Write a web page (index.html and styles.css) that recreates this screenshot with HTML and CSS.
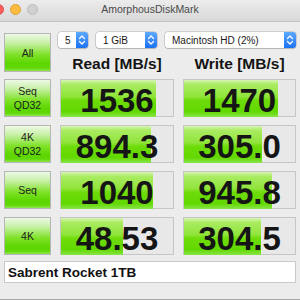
FILE: index.html
```html
<!DOCTYPE html>
<html lang="en">
<head>
  <meta charset="UTF-8">
  <title>AmorphousDiskMark</title>
  <link rel="stylesheet" href="styles.css">
</head>
<body>
  <div class="window">
    <div class="titlebar">
      <div class="lights">
        <span class="light red"></span>
        <span class="light yellow"></span>
        <span class="light gray"></span>
      </div>
      <div class="title">AmorphousDiskMark</div>
      <div></div>
    </div>

    <div class="main">
      <div class="top">
        <div class="btn all">All</div>
        <div class="selects">
          <div class="select w-count">5<span class="stepper"><svg width="12" height="16" viewBox="0 0 12 16"><path d="M3.5 6.5L6 4l2.5 2.5M3.5 9.5L6 12l2.5-2.5" fill="none" stroke="#fff" stroke-width="1.3" stroke-linecap="round" stroke-linejoin="round"/></svg></span></div>
          <div class="select w-size">1 GiB<span class="stepper"><svg width="12" height="16" viewBox="0 0 12 16"><path d="M3.5 6.5L6 4l2.5 2.5M3.5 9.5L6 12l2.5-2.5" fill="none" stroke="#fff" stroke-width="1.3" stroke-linecap="round" stroke-linejoin="round"/></svg></span></div>
          <div class="select w-disk">Macintosh HD (2%)<span class="stepper"><svg width="12" height="16" viewBox="0 0 12 16"><path d="M3.5 6.5L6 4l2.5 2.5M3.5 9.5L6 12l2.5-2.5" fill="none" stroke="#fff" stroke-width="1.3" stroke-linecap="round" stroke-linejoin="round"/></svg></span></div>
        </div>
        <div class="head">Read [MB/s]</div>
        <div class="head">Write [MB/s]</div>
      </div>

      <div class="results">
        <div class="btn">Seq<br>QD32</div>
        <div class="bar"><div class="fill" style="width: 85%"></div><div class="value">1536</div></div>
        <div class="bar"><div class="fill" style="width: 85%"></div><div class="value">1470</div></div>

        <div class="btn">4K<br>QD32</div>
        <div class="bar"><div class="fill" style="width: 80%"></div><div class="value">894.3</div></div>
        <div class="bar"><div class="fill" style="width: 70%"></div><div class="value">305.0</div></div>

        <div class="btn">Seq</div>
        <div class="bar"><div class="fill" style="width: 82%"></div><div class="value">1040</div></div>
        <div class="bar"><div class="fill" style="width: 79%"></div><div class="value">945.8</div></div>

        <div class="btn">4K</div>
        <div class="bar"><div class="fill" style="width: 55%"></div><div class="value">48.53</div></div>
        <div class="bar"><div class="fill" style="width: 69%"></div><div class="value">304.5</div></div>
      </div>

      <div class="name">Sabrent Rocket 1TB</div>
    </div>
  </div>
</body>
</html>
```

FILE: styles.css
```css
body {
  margin: 0;
  font-family: "Liberation Sans", Arial, sans-serif;
  background: #ececec;
  color: #1a1a1a;
}
.window {
  width: 300px;
  height: 300px;
  box-sizing: border-box;
  border-bottom: 1px solid #a8a8a8;
  overflow: hidden;
}
.titlebar {
  height: 21px;
  border-bottom: 1px solid #c2c2c2;
  background: linear-gradient(#ececec, #d8d8d8);
  display: grid;
  grid-template-columns: 1fr auto 1fr;
  align-items: center;
}
.lights {
  display: flex;
  gap: 6px;
  margin-left: -7px;
  margin-top: -3px;
}
.light {
  width: 9px;
  height: 9px;
  border-radius: 50%;
}
.red {
  background: #fc605c;
  border: 0.5px solid #de4a45;
}
.yellow {
  background: #fdbc40;
  border: 0.5px solid #dea134;
}
.gray {
  background: #d0d0d0;
  border: 0.5px solid #bcbcbc;
}
.title {
  font-size: 10.5px;
  color: #4a4a4a;
  margin-top: -3px;
}
.main {
  padding: 10px 4px 0;
}
.top,
.results {
  display: grid;
  grid-template-columns: 47px 114px 113px;
  column-gap: 9px;
}
.btn {
  box-sizing: border-box;
  border: 1px solid #b6b6b6;
  background: linear-gradient(#eef9e6 0%, #c6f0a4 25%, #80e22a 55%, #5cd600 80%, #62d808 92%, #8ee850 100%);
  display: flex;
  align-items: center;
  justify-content: center;
  text-align: center;
  font-size: 10.5px;
  line-height: 14px;
  color: #1c1c1c;
}
.all {
  grid-row: 1 / span 2;
  height: 39px;
  margin-top: 1px;
}
.selects {
  grid-column: 2 / span 2;
  display: flex;
  gap: 8px;
  margin-left: -2px;
  height: 16px;
}
.select {
  box-sizing: border-box;
  height: 16px;
  background: #fff;
  border-radius: 3px;
  box-shadow: 0 0 0 0.5px rgba(0, 0, 0, 0.25), 0 1px 1px rgba(0, 0, 0, 0.12);
  display: flex;
  align-items: center;
  justify-content: space-between;
  padding-left: 7px;
  font-size: 10px;
  color: #1a1a1a;
}
.w-count {
  width: 30px;
}
.w-size {
  width: 61px;
}
.w-disk {
  width: 131px;
}
.stepper {
  width: 12px;
  height: 16px;
  border-radius: 0 3px 3px 0;
  background: linear-gradient(#5ea8ff, #1b72f2);
}
.stepper svg {
  display: block;
}
.head {
  padding-top: 7px;
  line-height: 18px;
  font-size: 15.5px;
  font-weight: bold;
  text-align: center;
  color: #141414;
}
.results {
  margin-top: 6px;
  grid-auto-rows: 38px;
  row-gap: 8px;
}
.bar {
  box-sizing: border-box;
  border: 1px solid #c6c6c6;
  background: #e8e8e8;
  display: grid;
}
.fill {
  grid-area: 1 / 1;
  height: 100%;
  background: linear-gradient(#d6f5b4 0%, #aaec62 12%, #90e43a 45%, #6edc0a 55%, #62d800 85%, #88e44a 100%);
}
.value {
  grid-area: 1 / 1;
  justify-self: center;
  align-self: center;
  margin-top: 4px;
  font-size: 33px;
  line-height: 33px;
  font-weight: bold;
  color: #151515;
}
.name {
  margin-top: 6px;
  height: 22px;
  box-sizing: border-box;
  border: 1px solid #c9c9c9;
  background: #fff;
  padding: 0 3px;
  display: flex;
  align-items: center;
  font-size: 13.5px;
  font-weight: bold;
  color: #111;
}
```
